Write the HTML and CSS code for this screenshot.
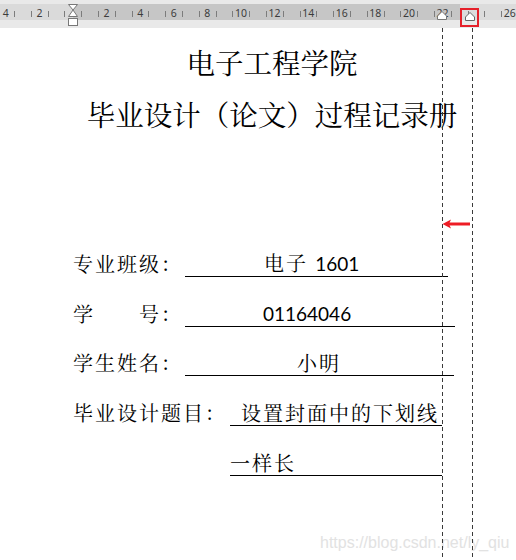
FILE: index.html
```html
<!DOCTYPE html>
<html lang="zh-CN">
<head>
<meta charset="utf-8">
<title>电子工程学院</title>
<link rel="stylesheet" href="styles.css">
</head>
<body>
<header class="ruler">
  <div class="ruler-band">
    <div class="scale">
      <span>4</span><span>2</span><span></span><span>2</span><span>4</span><span>6</span><span>8</span><span>10</span><span>12</span><span>14</span><span>16</span><span>18</span><span>20</span><span>22</span><span></span><span>26</span>
    </div>
  </div>
  <svg class="marker hourglass" width="10" height="22" viewBox="0 0 10 22">
    <polygon points="0.5,0.5 9.5,0.5 5,6" fill="#fff" stroke="#777" stroke-width="1"/>
    <polygon points="5,6 0.5,12.5 9.5,12.5" fill="#fff" stroke="#777" stroke-width="1"/>
    <rect x="0.5" y="14.5" width="9" height="7" fill="#fff" stroke="#777" stroke-width="1"/>
  </svg>
  <svg class="marker indent-right" width="10" height="9" viewBox="0 0 10 9">
    <polygon points="5,0.5 9.5,5 9.5,8.5 0.5,8.5 0.5,5" fill="#fff" stroke="#777" stroke-width="1"/>
  </svg>
  <div class="highlight">
    <svg width="10" height="9" viewBox="0 0 10 9">
      <polygon points="5,0.5 9.5,5 9.5,8.5 0.5,8.5 0.5,5" fill="#fff" stroke="#666" stroke-width="1"/>
    </svg>
  </div>
</header>

<main class="page">
  <h1 class="title">电子工程学院</h1>
  <h1 class="title">毕业设计（论文）过程记录册</h1>

  <section class="form">
    <div class="row">
      <span class="label">专业班级：</span>
      <span class="field f1">电子 <span class="num">1601</span></span>
    </div>
    <div class="row">
      <span class="label">学　　号：</span>
      <span class="field f2"><span class="num">01164046</span></span>
    </div>
    <div class="row">
      <span class="label">学生姓名：</span>
      <span class="field f3">小明</span>
    </div>
    <div class="row">
      <span class="label label-wide">毕业设计题目：</span>
      <span class="field f4">设置封面中的下划线</span>
    </div>
    <div class="row">
      <span class="label label-wide"></span>
      <span class="field f5">一样长</span>
    </div>
  </section>
</main>

<div class="watermark">https://blog.csdn.net/ly_qiu</div>
<div class="guide guide-indent"></div>
<div class="guide guide-margin"></div>
<svg class="arrow" width="30" height="10" viewBox="0 0 30 10">
  <line x1="6" y1="5" x2="28" y2="5" stroke="#ee1c25" stroke-width="3"/>
  <polygon points="0.5,5 9,0.5 7,5 9,9.5" fill="#ee1c25"/>
</svg>
</body>
</html>
```
FILE: styles.css
```css
html, body {
  margin: 0;
  padding: 0;
}

body {
  width: 516px;
  height: 560px;
  overflow: hidden;
  position: relative;
  background: #ffffff;
  color: #000;
  font-family: "Noto Serif CJK SC", "Noto Sans CJK SC", sans-serif;
}

/* ---------- ruler ---------- */
.ruler {
  position: relative;
  height: 28px;
  box-sizing: border-box;
  padding-top: 4px;
  background: #e9e9e9;
  overflow: hidden;
}

.ruler-band {
  height: 16px;
  background:
    repeating-linear-gradient(90deg, transparent 0 14px, #7c7c7c 14px 15px, transparent 15px 16.8px) 0 7px / 100% 6px repeat-x,
    linear-gradient(90deg, #dadada 0 73px, #c6c6c6 73px 460px, #dcdcdc 460px);
}

.scale {
  display: grid;
  grid-template-columns: repeat(16, 33.6px);
  margin-left: -11px;
  height: 16px;
  padding-top: 1px;
  box-sizing: border-box;
  font: 400 10.5px/16px "Noto Sans", "Liberation Sans", sans-serif;
  color: #3c3c3c;
  text-align: center;
}

.marker {
  position: absolute;
  display: block;
}

.hourglass {
  left: 68px;
  top: 4px;
}

.indent-right {
  left: 437px;
  top: 11px;
}

.highlight {
  position: absolute;
  left: 460px;
  top: 8px;
  width: 19px;
  height: 19px;
  box-sizing: border-box;
  border: 2px solid #e5202a;
  display: flex;
  justify-content: center;
  padding-top: 2px;
}

.highlight svg {
  display: block;
}

/* ---------- page ---------- */
.page {
  margin-left: 73px;
  width: 398px;
  padding-top: 8px;
}

.title {
  margin: 0;
  font-size: 28.5px;
  font-weight: 400;
  line-height: 52px;
  text-align: center;
  white-space: nowrap;
}

.form {
  margin-top: 87px;
}

.row {
  display: flex;
  align-items: flex-end;
  height: 49.75px;
}

.label {
  flex: none;
  width: 112px;
  font-size: 20px;
  letter-spacing: 2px;
  line-height: 24px;
  padding-bottom: 1px;
  white-space: pre;
}

.label-wide {
  width: 157px;
}

.field {
  flex: none;
  box-sizing: border-box;
  border-bottom: 1px solid #000;
  font-size: 20px;
  letter-spacing: 2px;
  line-height: 24px;
  padding-bottom: 0;
  white-space: pre;
}

.num {
  font-family: Lato, "Liberation Sans", sans-serif;
  font-size: 19px;
  letter-spacing: 0;
}

.f1 { width: 263px; padding-left: 79px; }
.f2 { width: 270px; padding-left: 78px; }
.f3 { width: 269px; padding-left: 112px; }
.f4 { width: 212px; padding-left: 11px; }
.f5 { width: 212px; padding-left: 0; }

/* ---------- overlays ---------- */
.guide {
  position: absolute;
  top: 28px;
  bottom: 0;
  width: 1px;
  background: repeating-linear-gradient(to bottom, #3a3a3a 0 4px, transparent 4px 7px);
}

.guide-indent { left: 442px; }
.guide-margin { left: 472px; }

.arrow {
  position: absolute;
  left: 442px;
  top: 219px;
}

.watermark {
  position: absolute;
  left: 320px;
  top: 533px;
  font: 16px/20px "Liberation Sans", Arial, sans-serif;
  color: #e2e2e2;
  white-space: nowrap;
}
```
